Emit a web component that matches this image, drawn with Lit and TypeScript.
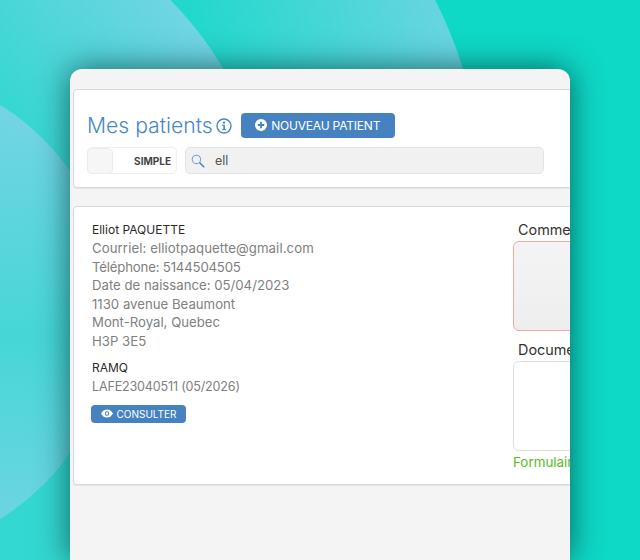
import { LitElement, html, css, svg } from "lit";
import { customElement } from "lit/decorators.js";

@customElement("app-root")
export class AppRoot extends LitElement {
  static styles = css`
    :host { display: block; position: relative; width: 640px; height: 560px; overflow: hidden; background: #0ed9c6; font-family: Inter, "Noto Sans", sans-serif; }
    .bg { position: absolute; left: 0; top: 0; }
    .stage { position: relative; padding: 69px 70px 0; height: 491px; }
    .panel { width: 500px; height: 491px; box-sizing: border-box; background: #f4f4f4; border-radius: 12px 12px 0 0; overflow: hidden; padding: 20px 0 0 3px; box-shadow: 0 0 32px rgba(0, 40, 40, .68); }
    .card { width: 620px; box-sizing: border-box; background: #fff; border: 1px solid #d9d9d9; border-radius: 4px; box-shadow: 0 1px 1px rgba(0,0,0,.06); }
    .top { height: 99px; padding: 22px 0 0 13px; margin-bottom: 18px; }
    .head { display: flex; align-items: center; height: 26px; }
    h1 { margin: 0; font-size: 21.2px; font-weight: 300; color: #4a86c6; letter-spacing: -.02px; white-space: nowrap; }
    .info { margin: 2px 9px 0 3px; display: block; }
    .btn { display: flex; align-items: center; justify-content: center; background: #4682c0; color: #fff; border-radius: 4px; white-space: nowrap; }
    .new { width: 154px; height: 25px; font-size: 12px; gap: 4px; letter-spacing: -.2px; }
    .filters { display: flex; gap: 8px; margin-top: 9px; }
    .toggle { width: 90px; height: 27px; box-sizing: border-box; display: flex; align-items: center; justify-content: space-between; border: 1px solid #efefef; border-radius: 5px; background: #fff; padding-right: 5px; }
    .knob { width: 26px; height: 26px; box-sizing: border-box; margin-left: -1px; background: #f6f6f6; border: 1px solid #ececec; border-radius: 5px; }
    .toggle span { font-size: 10px; font-weight: 700; color: #444; }
    .search { width: 359px; height: 27px; box-sizing: border-box; display: flex; align-items: center; gap: 10px; padding-left: 5px; background: #f1f1f1; border: 1px solid #e3e3e3; border-radius: 5px; font-size: 12.5px; color: #555; }
    .patient { height: 279px; padding: 13.5px 0 0 18px; display: grid; grid-template-columns: 421px 1fr; }
    .line { font-size: 13.2px; line-height: 18.6px; color: #808080; white-space: nowrap; }
    .line.dark { color: #2b2b2b; font-size: 12px; }
    .line.num { letter-spacing: -.18px; }
    .line.mail { letter-spacing: .09px; }
    .line.ramq { font-size: 12.6px; letter-spacing: -.2px; }
    .mb { margin-bottom: 8.5px; }
    .consult { width: 95px; height: 18px; margin: 8.5px 0 0 -1px; font-size: 10px; gap: 4px; }
    .label { font-size: 14.4px; line-height: 18px; color: #333; padding-left: 5px; white-space: nowrap; }
    .box { width: 120px; box-sizing: border-box; border-radius: 6px; }
    .comment { height: 90px; margin: 2.5px 0 10px; background: linear-gradient(#f4f4f4, #eeeeee); border: 1px solid #f4aaa2; }
    .docs { height: 90px; margin: 1.5px 0 2px; background: #fff; border: 1px solid #dedede; }
    .green { font-size: 13.4px; line-height: 18px; color: #58bd1c; white-space: nowrap; }
  `;

  render() {
    return html`
      <svg class="bg" width="640" height="560" viewBox="0 0 640 560">
        <defs>
          <linearGradient id="a" gradientUnits="userSpaceOnUse" x1="20" y1="140" x2="190" y2="0">
            <stop offset="0" stop-color="#d0d0ff" stop-opacity=".1"/>
            <stop offset="1" stop-color="#d0d0ff" stop-opacity=".48"/>
          </linearGradient>
          <linearGradient id="c" gradientUnits="userSpaceOnUse" x1="200" y1="60" x2="440" y2="0">
            <stop offset="0" stop-color="#d0d0ff" stop-opacity=".1"/>
            <stop offset="1" stop-color="#d0d0ff" stop-opacity=".46"/>
          </linearGradient>
          <linearGradient id="b" x1="0" y1="0" x2="0" y2="1">
            <stop offset="0" stop-color="#d0d0ff" stop-opacity=".46"/>
            <stop offset="0.55" stop-color="#d0d0ff" stop-opacity=".12"/>
            <stop offset="1" stop-color="#d0d0ff" stop-opacity=".42"/>
          </linearGradient>
        </defs>
        ${svg`<circle cx="41" cy="200" r="442" fill="url(#c)"/>
        <circle cx="-83" cy="250" r="356" fill="url(#a)"/>
        <circle cx="-129" cy="312" r="244" fill="url(#b)"/>`}
      </svg>
      <div class="stage">
        <div class="panel">
          <section class="card top">
            <div class="head">
              <h1>Mes patients</h1>
              <svg class="info" width="16" height="16" viewBox="0 0 16 16" fill="none">
                <circle cx="8" cy="8" r="7" stroke="#4a86c6" stroke-width="1.4"/>
                <circle cx="8" cy="4.6" r="1.2" fill="#4a86c6"/>
                <path d="M6.2 6.8h2.700v4.400h1.100v1.100H6.100v-1.100h1.200V7.900H6.200z" fill="#4a86c6"/>
              </svg>
              <div class="btn new">
                <svg width="12" height="12" viewBox="0 0 12 12"><circle cx="6" cy="6" r="6" fill="#fff"/><path d="M6 2.8v6.4M2.8 6h6.4" stroke="#4682c0" stroke-width="1.8"/></svg>
                NOUVEAU PATIENT
              </div>
            </div>
            <div class="filters">
              <div class="toggle"><div class="knob"></div><span>SIMPLE</span></div>
              <div class="search">
                <svg width="14" height="14" viewBox="0 0 14 14" fill="none"><circle cx="5.400" cy="5.400" r="4.200" stroke="#7ba3cf" stroke-width="1.100"/><path d="M8.600 8.600l4.600 4.600" stroke="#4a86c6" stroke-width="1.500"/></svg>
                <span>ell</span>
              </div>
            </div>
          </section>
          <section class="card patient">
            <div>
              <div class="line dark">Elliot PAQUETTE</div>
              <div class="line mail">Courriel: elliotpaquette@gmail.com</div>
              <div class="line num">Téléphone: 5144504505</div>
              <div class="line">Date de naissance: 05/04/2023</div>
              <div class="line">1130 avenue Beaumont</div>
              <div class="line">Mont-Royal, Quebec</div>
              <div class="line mb">H3P 3E5</div>
              <div class="line dark">RAMQ</div>
              <div class="line ramq">LAFE23040511 (05/2026)</div>
              <div class="btn consult">
                <svg width="12" height="9" viewBox="0 0 12 9"><path d="M0 4.500C1.500 1.600 3.600.4 6 .4s4.500 1.200 6 4.100C10.500 7.400 8.400 8.600 6 8.600S1.500 7.400 0 4.500z" fill="#fff"/><circle cx="6" cy="4.500" r="2.200" fill="#4682c0"/><circle cx="6" cy="4.500" r="1.200" fill="#fff"/></svg>
                CONSULTER
              </div>
            </div>
            <div>
              <div class="label">Commentaires</div>
              <div class="box comment"></div>
              <div class="label">Documents</div>
              <div class="box docs"></div>
              <div class="green">Formulaire</div>
            </div>
          </section>
        </div>
      </div>
    `;
  }
}
